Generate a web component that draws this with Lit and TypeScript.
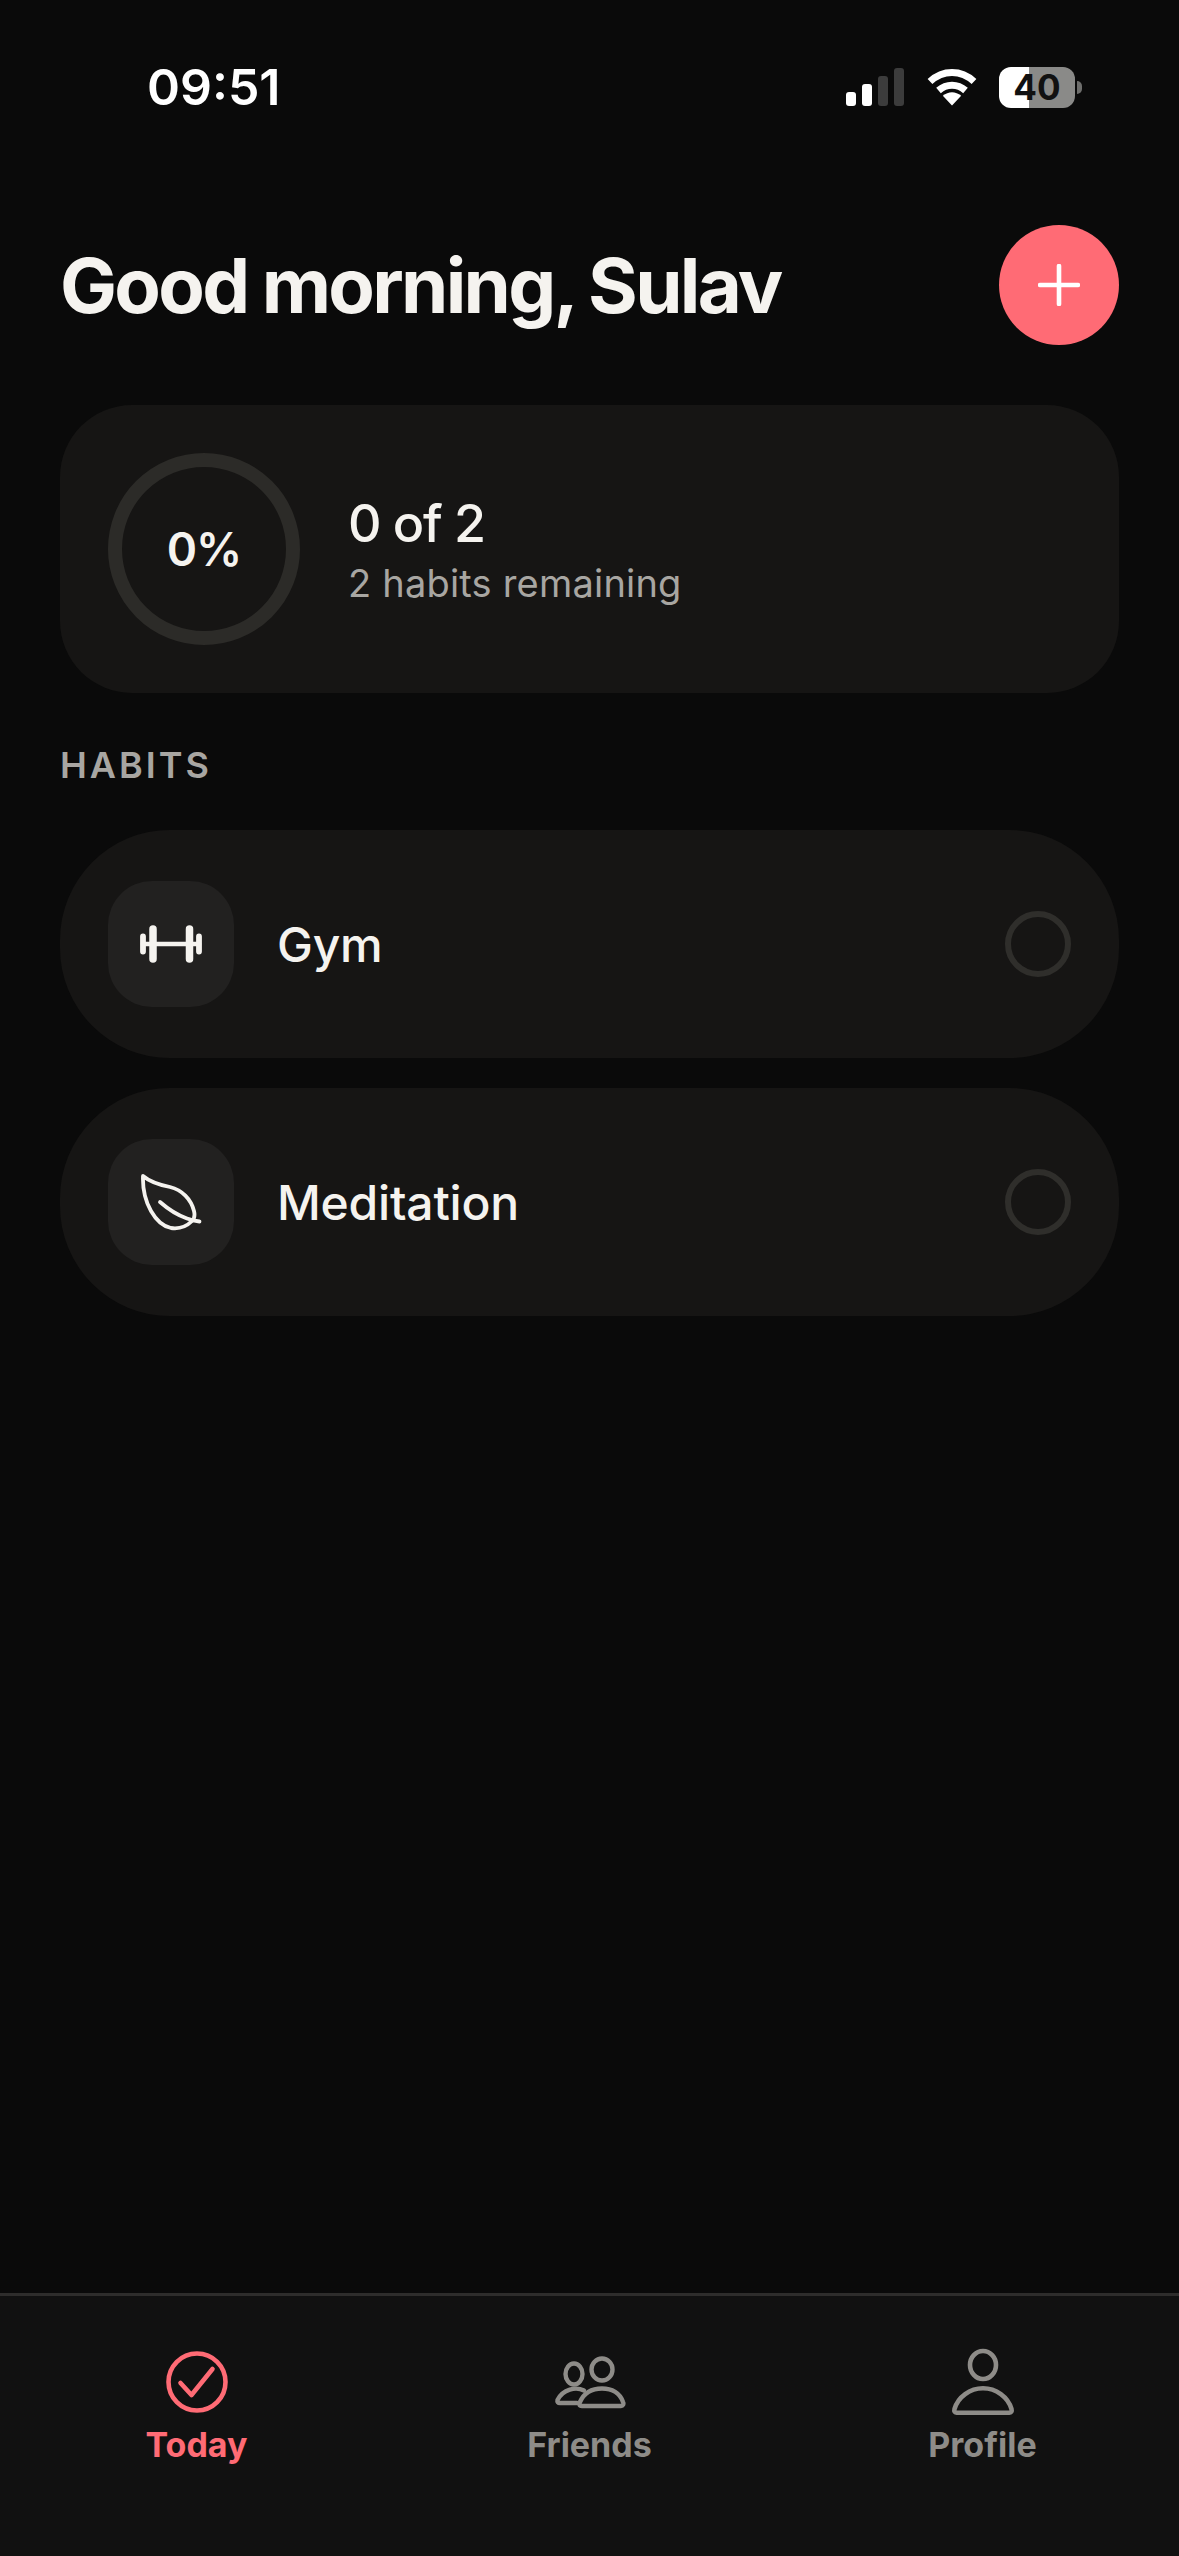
import { html, css, LitElement } from 'lit'
import { customElement } from 'lit/decorators.js'

const dumbbell = html`<svg width="64" height="40" viewBox="0 0 64 40" fill="none" stroke="#f5f3ef" stroke-linecap="round">
    <path d="M4 20H60" stroke-width="4.6" />
    <path d="M14 5V35M50.500 5V35" stroke-width="7.5" />
    <path d="M4 12.500V27.500M60 12.500V27.500" stroke-width="5.8" />
</svg>`

const leaf = html`<svg width="62" height="58" viewBox="0 0 62 58" fill="none" stroke="#f5f3ef" stroke-width="3.8" stroke-linecap="round" stroke-linejoin="round">
    <path d="M3 3C10 9 20 12 30 14C42 17 51 26 54 38C55 42 54 46 52 48C46 54 38 56 31 55C16 52 2 30 3 3Z" />
    <path d="M20 29C28 36 37 42 47 45.500C51 47 55 48 59.500 48.500" />
</svg>`

const today = html`<svg width="64" height="64" viewBox="0 0 64 64" fill="none" stroke="#ff6b75" stroke-width="4.6" stroke-linecap="round" stroke-linejoin="round">
    <circle cx="32" cy="32" r="28.5" />
    <path d="M15.500 33L26.500 45L47.500 19" />
</svg>`

const friends = html`<svg width="72" height="56" viewBox="0 -2 72 56" fill="none" stroke="#8e8c88" stroke-width="4.4" stroke-linecap="round" stroke-linejoin="round">
    <ellipse cx="20" cy="18" rx="8.500" ry="10.500" />
    <ellipse cx="48" cy="13.500" rx="10.500" ry="11" />
    <path d="M30 34.500C22 30.500 9 33 3.500 44C3 46 4 47 6 47H23" />
    <path d="M28 50C25 50 25 48 26 46C30 37 38 32.500 48 32.500C58 32.500 66 37 69 46C70 48 69 50 67 50Z" />
</svg>`

const profile = html`<svg width="64" height="68" viewBox="0 0 64 68" fill="none" stroke="#8e8c88" stroke-width="4.6" stroke-linecap="round" stroke-linejoin="round">
    <ellipse cx="32" cy="17" rx="13" ry="14" />
    <path d="M5.500 64.700C3.500 64.700 3 63 3.500 61C7 49 19 40.300 32 40.300C45 40.300 57 49 60.500 61C61 63 60.500 64.700 58.500 64.700Z" />
</svg>`

@customElement('app-root')
export class AppRoot extends LitElement {
    static styles = css`
        :host {
            display: flex;
            flex-direction: column;
            height: 2556px;
            background: #0a0a0a;
            color: #f5f3ef;
            font-family: Inter, 'Liberation Sans', sans-serif;
            overflow: hidden;
        }

        .status {
            display: flex;
            align-items: center;
            box-sizing: border-box;
            height: 131px;
            padding: 43px 104px 0 147px;
        }

        .time {
            flex: 1;
            font-size: 50px;
            font-weight: 600;
            line-height: 1;
            color: #fff;
        }

        .signal {
            display: flex;
            align-items: flex-end;
            gap: 6px;
            height: 38px;
            margin-right: 23px;
        }

        .signal span {
            width: 10px;
            border-radius: 3px;
            background: #fff;
        }

        .signal span.off {
            background: #3c3c3c;
        }

        .battery {
            position: relative;
            width: 76px;
            height: 41px;
            margin-left: 22px;
            border-radius: 12px;
            background: linear-gradient(90deg, #fff 0 30px, #8a8a88 30px);
            color: #111;
            font-size: 35px;
            font-weight: 700;
            line-height: 41px;
            text-align: center;
        }

        .battery::after {
            content: '';
            position: absolute;
            right: -7px;
            top: 14px;
            width: 5px;
            height: 13px;
            border-radius: 0 7px 7px 0;
            background: #6e6e6c;
        }

        main {
            flex: 1;
            padding: 94px 60px 0;
        }

        header {
            display: flex;
            align-items: center;
            justify-content: space-between;
        }

        h1 {
            margin: 0;
            font-size: 76px;
            font-weight: 700;
            letter-spacing: -2.7px;
            word-spacing: -1px;
            line-height: 120px;
        }

        .add {
            display: flex;
            align-items: center;
            justify-content: center;
            width: 120px;
            height: 120px;
            border: none;
            border-radius: 50%;
            padding: 0;
            background: #ff6b75;
        }

        .summary {
            display: flex;
            align-items: center;
            gap: 48px;
            height: 288px;
            margin-top: 60px;
            padding-left: 48px;
            border-radius: 72px;
            background: #161514;
        }

        .ring {
            display: flex;
            align-items: center;
            justify-content: center;
            width: 192px;
            height: 192px;
            box-sizing: border-box;
            border: 14px solid #2c2b28;
            border-radius: 50%;
            font-size: 46px;
            font-weight: 600;
            letter-spacing: -1px;
        }

        .count {
            font-size: 52px;
            font-weight: 500;
            letter-spacing: -1.3px;
            line-height: 62px;
        }

        .remaining {
            margin-top: 5px;
            font-size: 38px;
            letter-spacing: 0.2px;
            line-height: 46px;
            color: #a8a6a2;
        }

        .label {
            margin: 50px 0 0;
            font-size: 36px;
            font-weight: 600;
            letter-spacing: 3px;
            line-height: 44px;
            color: #a8a6a2;
        }

        .habits {
            display: flex;
            flex-direction: column;
            gap: 30px;
            margin-top: 43px;
        }

        .habit {
            display: flex;
            align-items: center;
            height: 228px;
            padding: 0 48px;
            border-radius: 110px;
            background: #161514;
        }

        .icon {
            display: flex;
            align-items: center;
            justify-content: center;
            width: 126px;
            height: 126px;
            border-radius: 44px;
            background: #222120;
        }

        .name {
            flex: 1;
            margin-left: 43px;
            font-size: 48px;
            font-weight: 500;
            letter-spacing: -0.2px;
        }

        .check {
            width: 66px;
            height: 66px;
            box-sizing: border-box;
            border: 6px solid #2f2e2b;
            border-radius: 50%;
        }

        nav {
            display: grid;
            grid-template-columns: repeat(3, 1fr);
            box-sizing: border-box;
            height: 263px;
            padding-top: 50px;
            border-top: 3px solid #2e2d2c;
            background: #111111;
        }

        .tab {
            display: flex;
            flex-direction: column;
            align-items: center;
            font-size: 34px;
            font-weight: 700;
            color: #8e8c88;
        }

        .tab.active {
            color: #ff6b75;
        }

        .glyph {
            display: flex;
            align-items: center;
            justify-content: center;
            height: 72px;
        }

        .tab span {
            margin-top: 5px;
            line-height: 44px;
        }
    `

    render() {
        return html`
            <div class="status">
                <div class="time">09:51</div>
                <div class="signal">
                    <span style="height: 14px"></span>
                    <span style="height: 22px"></span>
                    <span class="off" style="height: 30px"></span>
                    <span class="off" style="height: 38px"></span>
                </div>
                <svg width="50" height="38" viewBox="0 0 50 38" fill="none" stroke="#fff" stroke-width="7">
                    <path d="M3 13.500C16 1.500 34 1.500 47 13.500" />
                    <path d="M11.500 22.500C19.500 15.500 30.500 15.500 38.500 22.500" />
                    <path d="M15.800 27.800L25 37.500L34.200 27.800C28.500 23 21.500 23 15.800 27.800Z" fill="#fff" stroke="none" />
                </svg>
                <div class="battery">40</div>
            </div>
            <main>
                <header>
                    <h1>Good morning, Sulav</h1>
                    <button class="add">
                        <svg width="42" height="42" viewBox="0 0 42 42" stroke="#fff" stroke-width="4.6" stroke-linecap="round">
                            <path d="M21 2V40M2 21H40" />
                        </svg>
                    </button>
                </header>
                <section class="summary">
                    <div class="ring">0%</div>
                    <div>
                        <div class="count">0 of 2</div>
                        <div class="remaining">2 habits remaining</div>
                    </div>
                </section>
                <h2 class="label">HABITS</h2>
                <div class="habits">
                    <div class="habit">
                        <div class="icon">${dumbbell}</div>
                        <div class="name">Gym</div>
                        <div class="check"></div>
                    </div>
                    <div class="habit">
                        <div class="icon">${leaf}</div>
                        <div class="name">Meditation</div>
                        <div class="check"></div>
                    </div>
                </div>
            </main>
            <nav>
                <div class="tab active">
                    <div class="glyph">${today}</div>
                    <span>Today</span>
                </div>
                <div class="tab">
                    <div class="glyph">${friends}</div>
                    <span>Friends</span>
                </div>
                <div class="tab">
                    <div class="glyph">${profile}</div>
                    <span>Profile</span>
                </div>
            </nav>
        `
    }
}
